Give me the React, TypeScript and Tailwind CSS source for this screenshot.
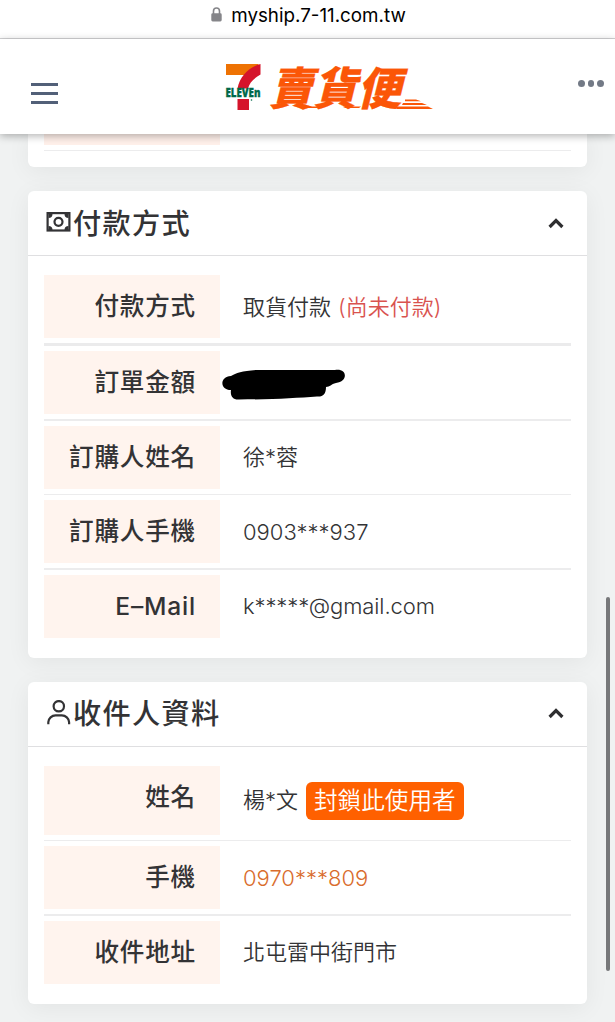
import React from 'react';

interface RowProps {
  label: string;
  children?: React.ReactNode;
  size?: 'normal' | 'tall';
  divider?: 'thin' | 'thick' | 'none';
}

const getDividerClass = (divider: RowProps['divider']) => {
  switch (divider) {
    case 'thick':
      return 'h-[3px] my-[5px] bg-[#ebebec]';
    case 'none':
      return 'h-0';
    default:
      return 'h-[1.5px] my-[5px] bg-[#ececed]';
  }
};

const Row: React.FC<RowProps> = ({ label, children, size = 'normal', divider = 'thin' }) => (
  <div>
    <div className={`flex ${size === 'tall' ? 'h-[69px]' : 'h-[63px]'}`}>
      <div className={`flex w-[176px] shrink-0 items-center justify-end bg-[#fff4ee] pr-6 text-[24.6px] font-medium tracking-[0.8px] ${size === 'tall' ? 'pb-[5px]' : ''}`}>
        {label}
      </div>
      <div className="flex flex-1 items-center pt-px pl-[23px] text-[22px] font-[350]">{children}</div>
    </div>
    <div className={getDividerClass(divider)}></div>
  </div>
);

const ChevronUp = () => (
  <svg width="16" height="12" viewBox="0 0 16 12" fill="none" stroke="#2e2e30" strokeWidth="3.2">
    <path d="M1.6 10 8 3.6 14.4 10" />
  </svg>
);

const BillIcon = () => (
  <svg width="25" height="20" viewBox="0 0 24 20" fill="none" stroke="#333335">
    <rect x="1.1" y="1.1" width="21.8" height="17.4" strokeWidth="2.2" />
    <circle cx="12" cy="9.8" r="4" strokeWidth="2.2" />
    <path d="M2 2h4a4 4 0 0 1-4 4zM22 2h-4a4 4 0 0 0 4 4zM2 18h4a4 4 0 0 0-4-4zM22 18h-4a4 4 0 0 1 4-4z" fill="#333335" stroke="none" />
  </svg>
);

const PersonIcon = () => (
  <svg width="25" height="26" viewBox="0 0 24 25" fill="none" stroke="#333335" strokeWidth="2.1">
    <circle cx="12.3" cy="6" r="5" />
    <path d="M2.2 23.3v-2a7 7 0 0 1 7-6.5h6a7 7 0 0 1 7 6.5v2" />
  </svg>
);

interface CardProps {
  title: string;
  icon: React.ReactNode;
  children: React.ReactNode;
}

const Card: React.FC<CardProps> = ({ title, icon, children }) => (
  <section className="rounded-md bg-white shadow-[0_4px_24px_rgba(0,0,0,0.06)]">
    <div className="flex h-[65px] items-center border-b-[1.5px] border-[#dfdfe1] pt-0.5 pr-[23px] pl-[18px]">
      <span className="mr-[2px] mb-1 shrink-0">{icon}</span>
      <h2 className="text-[28.2px] leading-none font-medium tracking-[1.3px]">{title}</h2>
      <span className="mb-[3px] ml-auto">
        <ChevronUp />
      </span>
    </div>
    <div className="px-4 pt-[19px] pb-5">{children}</div>
  </section>
);

const Logo = () => (
  <svg className="overflow-visible" width="212" height="52" viewBox="0 0 212 52">
    <path d="M1 2h33c-4 3-7 6-9 11H1z" fill="#ee7203" />
    <path d="M35.5 2v10.5c-7 4-11 8-12.5 14H12.5C15 14 24 5 35.5 2zM12.5 37H24v11H12.5z" fill="#d5142b" />
    <text x="0.5" y="35" fontSize="11.5" fontWeight="800" fill="#00694a" stroke="#00694a" strokeWidth="0.3" textLength="35" lengthAdjust="spacingAndGlyphs" className="font-['Open_Sans',sans-serif]">
      ELEVEn
    </text>
    <circle cx="26.5" cy="38" r="0.8" fill="#00694a" />
    <g transform="translate(44 42.5) skewX(-14)">
      <text fontSize="45" fontWeight="900" fill="#fb5607" stroke="#fb5607" strokeWidth="0.3" textLength="132" lengthAdjust="spacingAndGlyphs">賣貨便</text>
    </g>
    <path d="M180 37.5h11l5 1.8h-16zM178 41h19l5 2h-25zM74 46l4-1.5h17l-2 1.5zM118 46l4-1.5h14l-2 1.500zM168 44.5h35l5 2.500h-36z" fill="#fb5607" />
  </svg>
);

export default function App() {
  return (
    <div className="relative h-[1022px] w-[615px] overflow-hidden bg-[#f0f2f2] font-[Inter,'Noto_Sans_CJK_TC',sans-serif] text-[#333335]">
      <div className="flex h-[39px] justify-center border-b-[1.5px] border-[#d3d3d5] bg-white pt-1 pl-[2px]">
        <svg className="mt-[3px] mr-[9px]" width="11" height="15" viewBox="0 0 11 15">
          <path d="M2.5 7V4a3 3 0 0 1 6 0v3" fill="none" stroke="#858589" strokeWidth="1.6" />
          <rect x="0.3" y="6.3" width="10.4" height="8.2" rx="1.4" fill="#858589" />
        </svg>
        <span className="text-[18.8px] leading-6 text-black">myship.7-11.com.tw</span>
      </div>
      <header className="relative z-10 flex h-[95px] bg-white shadow-[0_2px_8px_rgba(0,0,0,0.3)]">
        <div className="mt-[44px] ml-[31px] flex w-[27px] flex-col gap-1.5">
          <div className="h-[3px] bg-[#526078]"></div>
          <div className="h-[3px] bg-[#526078]"></div>
          <div className="h-[3px] bg-[#526078]"></div>
        </div>
        <div className="mt-[23px] ml-[167px]">
          <Logo />
        </div>
        <div className="mt-[41px] ml-auto flex gap-[3px] pr-[11.5px]">
          <span className="size-[6.5px] rounded-full bg-[#737a86]"></span>
          <span className="size-[6.5px] rounded-full bg-[#737a86]"></span>
          <span className="size-[6.5px] rounded-full bg-[#737a86]"></span>
        </div>
      </header>

      <main className="flex flex-col gap-6 px-7">
        <div className="h-[33px] rounded-b-md bg-white px-4 shadow-[0_4px_24px_rgba(0,0,0,0.06)]">
          <div className="h-[10.5px] w-[176px] bg-[#fff0ea]"></div>
          <div className="mt-[5px] h-[1.5px] bg-[#ececed]"></div>
        </div>

        <Card title="付款方式" icon={<BillIcon />}>
          <Row label="付款方式" divider="thick">
            取貨付款<span className="ml-[7px] text-[#d9534f]">(尚未付款)</span>
          </Row>
          <Row label="訂單金額">
            {/* amount is scribbled out */}
            <svg className="mt-1 -ml-[21px]" width="123" height="32" viewBox="0 0 123 32">
              <path d="M9 7C14 4 20 2 34 1H113C126-1 126 13 114 14 109 15 108 18 104 18 104 25 101 28 95 27.5 75 29 50 30.5 17 30.5 11 31 8 27 9 21 -2 21-3 8 9 7z" fill="#000" />
            </svg>
          </Row>
          <Row label="訂購人姓名">徐*蓉</Row>
          <Row label="訂購人手機">0903***937</Row>
          <Row label="E–Mail" divider="none">
            <span className="tracking-[-0.1px]">k*****@gmail.com</span>
          </Row>
        </Card>

        <Card title="收件人資料" icon={<PersonIcon />}>
          <Row label="姓名" size="tall">
            楊*文
            <button className="ml-2 h-[38px] rounded-md bg-[#ff6000] px-2 text-[23.6px] leading-none font-[350] text-white">
              封鎖此使用者
            </button>
          </Row>
          <Row label="手機">
            <span className="text-[#d96c2c]">0970***809</span>
          </Row>
          <Row label="收件地址" divider="none">北屯雷中街門市</Row>
        </Card>
      </main>

      <div className="absolute top-[597px] right-[5px] h-[374px] w-1 rounded-full bg-[#77787a]"></div>
    </div>
  );
}
